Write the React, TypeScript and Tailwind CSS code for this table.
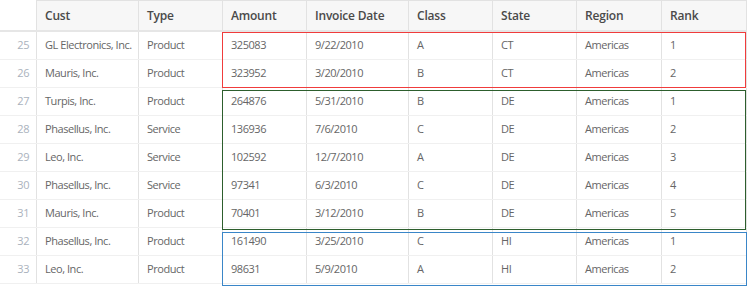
const columns = ["Cust", "Type", "Amount", "Invoice Date", "Class", "State", "Region", "Rank"];

const rows = [
  { id: 25, cust: "GL Electronics, Inc.", type: "Product", amount: "325083", date: "9/22/2010", cls: "A", state: "CT", region: "Americas", rank: "1" },
  { id: 26, cust: "Mauris, Inc.", type: "Product", amount: "323952", date: "3/20/2010", cls: "B", state: "CT", region: "Americas", rank: "2" },
  { id: 27, cust: "Turpis, Inc.", type: "Product", amount: "264876", date: "5/31/2010", cls: "B", state: "DE", region: "Americas", rank: "1" },
  { id: 28, cust: "Phasellus, Inc.", type: "Service", amount: "136936", date: "7/6/2010", cls: "C", state: "DE", region: "Americas", rank: "2" },
  { id: 29, cust: "Leo, Inc.", type: "Service", amount: "102592", date: "12/7/2010", cls: "A", state: "DE", region: "Americas", rank: "3" },
  { id: 30, cust: "Phasellus, Inc.", type: "Service", amount: "97341", date: "6/3/2010", cls: "C", state: "DE", region: "Americas", rank: "4" },
  { id: 31, cust: "Mauris, Inc.", type: "Product", amount: "70401", date: "3/12/2010", cls: "B", state: "DE", region: "Americas", rank: "5" },
  { id: 32, cust: "Phasellus, Inc.", type: "Product", amount: "161490", date: "3/25/2010", cls: "C", state: "HI", region: "Americas", rank: "1" },
  { id: 33, cust: "Leo, Inc.", type: "Product", amount: "98631", date: "5/9/2010", cls: "A", state: "HI", region: "Americas", rank: "2" },
];

const gridCols = "grid grid-cols-[37px_102px_84px_84px_102px_84px_84px_85px_85px]";

export default function App() {
  return (
    <div className="h-[286px] w-[750px] overflow-hidden bg-white font-['Open_Sans',sans-serif]">
      <div className="relative w-[747px]">
        <div className={`${gridCols} h-[32px] border-b-2 border-[#e6e6e6] text-[12px] tracking-[-0.2px]`}>
          <div className="border-r border-[#e2e2e2] bg-white" />
          {columns.map((col) => (
            <div
              key={col}
              className="flex items-center border-r border-t border-[#e2e2e2] bg-[#f7f7f7] pl-2 font-semibold text-[#4a4a4a]"
            >
              {col}
            </div>
          ))}
        </div>

        {rows.map((row) => (
          <div
            key={row.id}
            className={`${gridCols} h-[28px] border-b border-[#f0f0f0] text-[11px] tracking-[-0.45px] text-[#666]`}
          >
            <div className="flex items-center justify-end border-r border-[#e2e2e2] pr-[7px] text-[#aab2bd]">
              {row.id}
            </div>
            {[row.cust, row.type, row.amount, row.date, row.cls, row.state, row.region, row.rank].map((v, i) => (
              <div key={i} className="flex items-center whitespace-nowrap border-r border-[#e2e2e2] pl-2">
                {v}
              </div>
            ))}
          </div>
        ))}

        {/* group outlines */}
        <div className="pointer-events-none absolute left-[222px] top-[32px] h-[56px] w-[524px] border border-[#f03c3c]" />
        <div className="pointer-events-none absolute left-[222px] top-[90px] h-[140px] w-[524px] border border-[#2d5e2d]" />
        <div className="pointer-events-none absolute left-[222px] top-[232px] h-[54px] w-[525px] border border-[#3a86c8]" />
      </div>
    </div>
  );
}
